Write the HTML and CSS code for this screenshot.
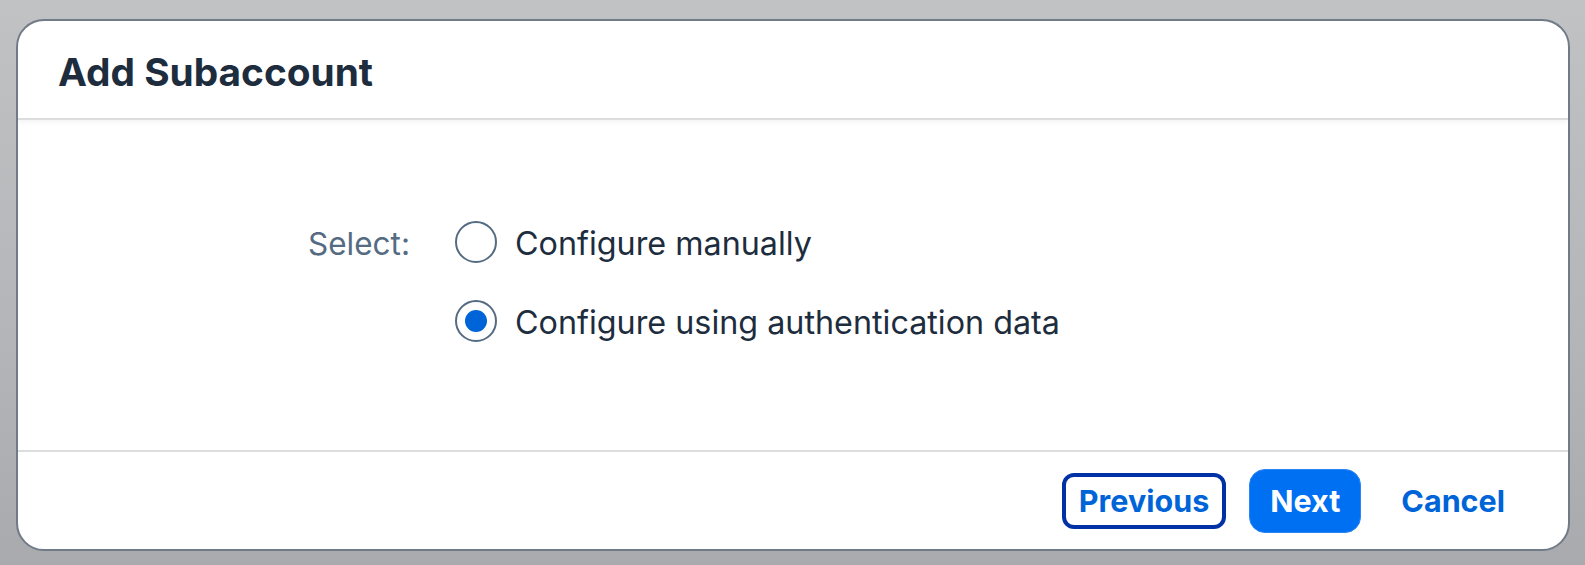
FILE: index.html
```html
<!DOCTYPE html>
<html lang="en">
<head>
<meta charset="utf-8">
<title>Add Subaccount</title>
<link rel="stylesheet" href="styles.css">
</head>
<body>
<div class="dialog" role="dialog" aria-labelledby="dlg-title">
  <header class="dialog-header">
    <h1 id="dlg-title" class="dialog-title">Add Subaccount</h1>
  </header>
  <section class="dialog-body">
    <div class="form">
      <span class="form-label">Select:</span>
      <div class="radio-group">
        <label class="radio">
          <span class="radio-circle"></span>
          <span class="radio-text">Configure manually</span>
        </label>
        <label class="radio">
          <span class="radio-circle radio-checked"><span class="radio-dot"></span></span>
          <span class="radio-text">Configure using authentication data</span>
        </label>
      </div>
    </div>
  </section>
  <footer class="dialog-footer">
    <button class="btn btn-transparent btn-focused">Previous</button>
    <button class="btn btn-emphasized">Next</button>
    <button class="btn btn-transparent">Cancel</button>
  </footer>
</div>
</body>
</html>
```
FILE: styles.css
```css
html, body {
  margin: 0;
  padding: 0;
  height: 100%;
}
body {
  background: linear-gradient(180deg, #c1c2c4 0%, #b3b5b8 60%, #a8aaad 100%);
  font-family: Inter, "Liberation Sans", sans-serif;
  color: #1d2d3e;
  padding: 19px 15px 0 16px;
  box-sizing: border-box;
}
.dialog {
  height: 532px;
  box-sizing: border-box;
  background: #ffffff;
  border: 2px solid #717a87;
  border-radius: 28px;
  display: flex;
  flex-direction: column;
  overflow: hidden;
}
.dialog-header {
  flex: none;
  display: flex;
  align-items: center;
  padding: 6px 40px 0 40px;
  box-sizing: content-box;
  height: 91px;
  border-bottom: 2px solid #dcdddf;
  box-shadow: 0 2px 5px rgba(0, 0, 0, 0.05);
  position: relative;
  z-index: 1;
}
.dialog-title {
  margin: 0;
  font-size: 38.8px;
  font-weight: 700;
  color: #1d2d3e;
  line-height: 1;
}
.dialog-body {
  height: 330px;
  flex: none;
  box-sizing: border-box;
  padding: 90px 0 0 272px;
}
.form {
  display: grid;
  grid-template-columns: 120px auto;
  column-gap: 45px;
  align-items: start;
}
.form-label {
  height: 64px;
  display: flex;
  align-items: center;
  justify-content: flex-end;
  font-size: 31.5px;
  color: #556b82;
  padding-top: 2px;
  box-sizing: border-box;
}
.radio-group {
  display: flex;
  flex-direction: column;
  gap: 15px;
}
.radio {
  height: 64px;
  display: flex;
  align-items: center;
  gap: 18px;
}
.radio-circle {
  width: 42px;
  height: 42px;
  box-sizing: border-box;
  border: 2.75px solid #556b82;
  border-radius: 50%;
  background: #ffffff;
  display: flex;
  align-items: center;
  justify-content: center;
  flex: none;
}
.radio-dot {
  width: 22px;
  height: 22px;
  border-radius: 50%;
  background: #0064d9;
}
.radio-text {
  font-size: 32.3px;
  color: #1d2d3e;
  padding-top: 2px;
}
.dialog-footer {
  flex: 1;
  border-top: 2px solid #dcdddf;
  display: flex;
  align-items: center;
  justify-content: flex-end;
  gap: 19px;
  padding: 0 42px 0 0;
}
.btn {
  height: 64px;
  padding: 0 20px;
  border: 1px solid transparent;
  border-radius: 16px;
  font-family: Inter, "Liberation Sans", sans-serif;
  font-size: 30.5px;
  font-weight: 700;
  background: transparent;
  color: #0064d9;
  cursor: pointer;
}
.btn-emphasized {
  background: #0070f2;
  border-color: #2b85f4;
  color: #ffffff;
}
.btn-focused {
  outline: 4px solid #0032a5;
  outline-offset: -8px;
}
```
